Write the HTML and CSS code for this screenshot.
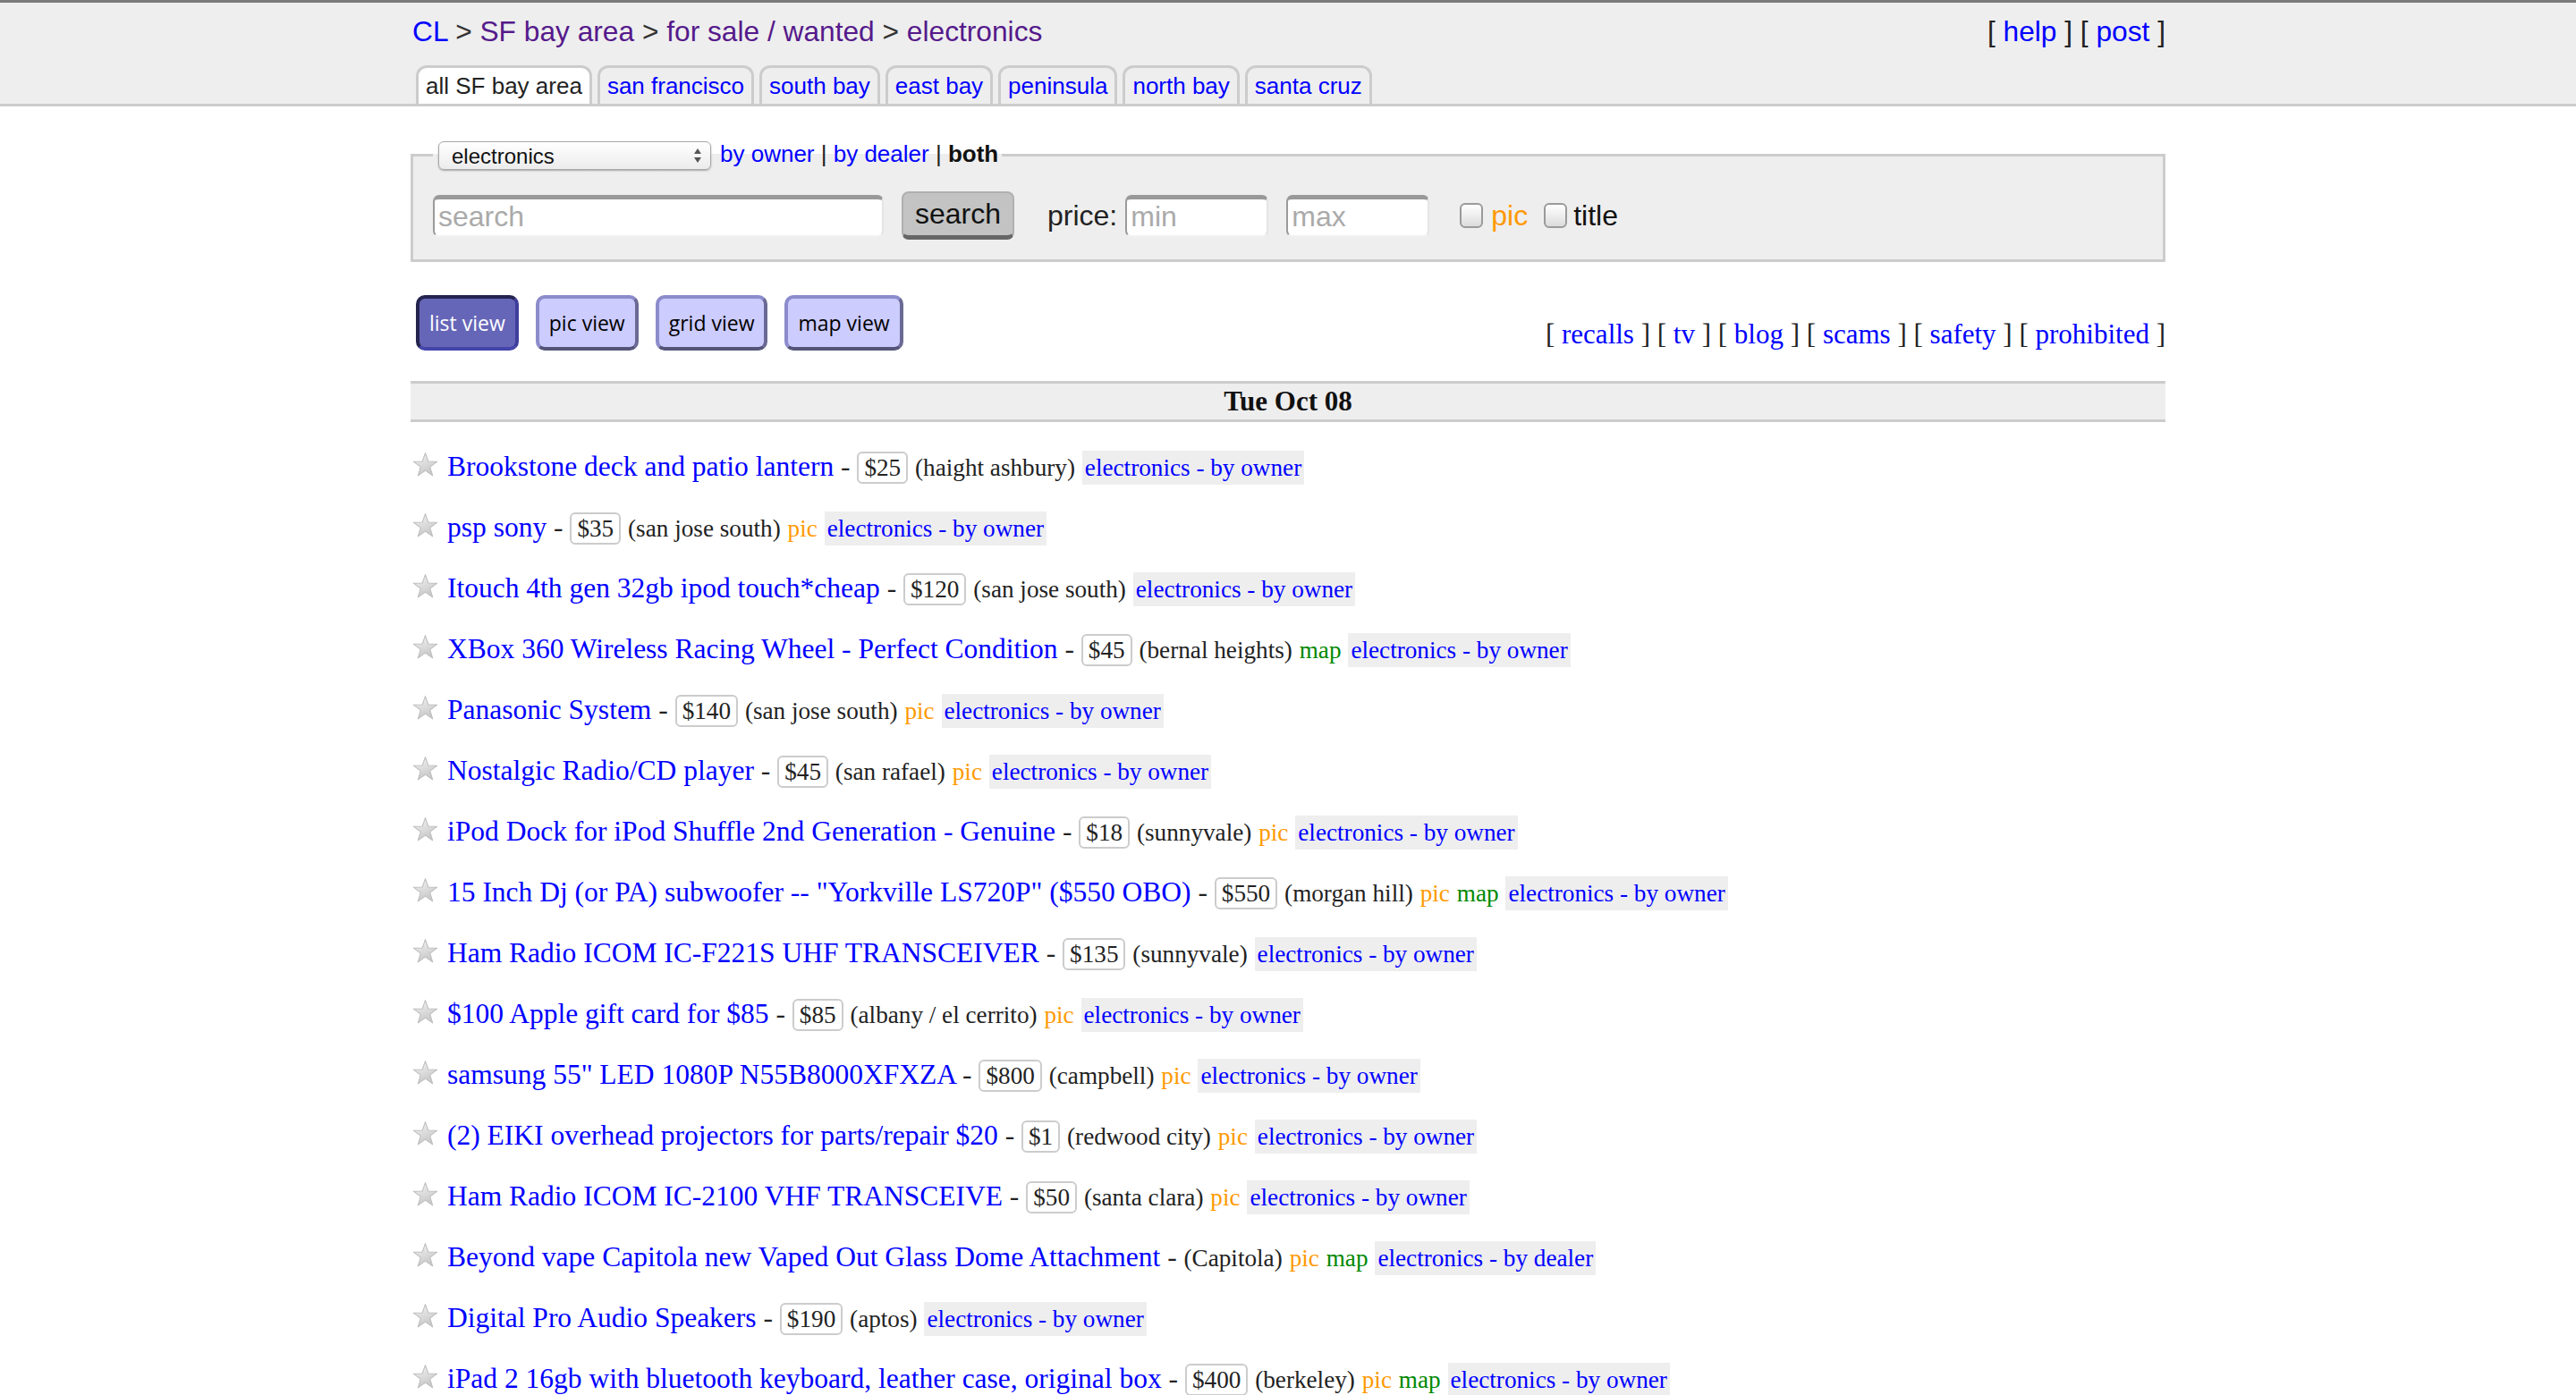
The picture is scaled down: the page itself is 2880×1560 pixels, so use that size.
FILE: index.html
```html
<!DOCTYPE html>
<html lang="en">
<head>
<meta charset="utf-8">
<title>SF bay area electronics - craigslist</title>
<link rel="stylesheet" href="styles.css">
</head>
<body>
<svg class="defs" width="0" height="0" aria-hidden="true">
  <defs>
    <linearGradient id="stargrad" x1="0" y1="0" x2="0.4" y2="1">
      <stop offset="0" stop-color="#f6f6f6"/>
      <stop offset="1" stop-color="#c8c8c8"/>
    </linearGradient>
    <symbol id="star" viewBox="0 0 28 28">
      <path d="M14 1.5 L17.2 10.6 L26.8 10.8 L19.1 16.6 L21.9 26 L14 20.4 L6.1 26 L8.9 16.6 L1.2 10.8 L10.8 10.6 Z" fill="url(#stargrad)" stroke="#bdbdbd" stroke-width="1" stroke-linejoin="round"/>
    </symbol>
  </defs>
</svg>

<header class="topbar">
  <div class="wrap">
    <div class="crumbrow">
      <div class="crumbs"><a href="#" class="cl">CL</a> &gt; <a href="#" class="vis">SF bay area</a> &gt; <a href="#" class="vis">for sale / wanted</a> &gt; <a href="#" class="vis">electronics</a></div>
      <div class="help">[ <a href="#">help</a> ] [ <a href="#">post</a> ]</div>
    </div>
    <nav class="tabs">
      <span class="tab current">all SF bay area</span>
      <a href="#" class="tab">san francisco</a>
      <a href="#" class="tab">south bay</a>
      <a href="#" class="tab">east bay</a>
      <a href="#" class="tab">peninsula</a>
      <a href="#" class="tab">north bay</a>
      <a href="#" class="tab">santa cruz</a>
    </nav>
  </div>
</header>

<main class="wrap">
  <form class="searchform">
    <fieldset>
      <legend><span class="selwrap"><select class="catsel"><option>electronics</option></select><svg class="selarrows" width="10" height="18" viewBox="0 0 10 18"><path d="M1 7 L5 1 L9 7 Z M1 11 L5 17 L9 11 Z" fill="#555"/></svg></span><a href="#">by owner</a> | <a href="#">by dealer</a> | <b>both</b></legend>
      <div class="searchrow">
        <input class="q" type="text" placeholder="search">
        <button class="go" type="button">search</button>
        <span class="pricelbl">price:</span>
        <input class="num min" type="text" placeholder="min">
        <input class="num max" type="text" placeholder="max">
        <input class="cb cb1" type="checkbox"><span class="piclbl">pic</span>
        <input class="cb cb2" type="checkbox"><span class="titlelbl">title</span>
      </div>
    </fieldset>
  </form>

  <div class="viewbar">
    <div class="views">
      <a href="#" class="vbtn active">list view</a>
      <a href="#" class="vbtn">pic view</a>
      <a href="#" class="vbtn">grid view</a>
      <a href="#" class="vbtn">map view</a>
    </div>
    <div class="links">[ <a href="#">recalls</a> ] [ <a href="#">tv</a> ] [ <a href="#">blog</a> ] [ <a href="#">scams</a> ] [ <a href="#">safety</a> ] [ <a href="#">prohibited</a> ]</div>
  </div>

  <h4 class="ban">Tue Oct 08</h4>

  <div class="rows">
    <p class="row"><svg class="star"><use href="#star"/></svg><a href="#" class="title">Brookstone deck and patio lantern</a> - <span class="price">$25</span> <span class="loc">(haight ashbury)</span> <a href="#" class="cat">electronics - by owner</a></p>
    <p class="row"><svg class="star"><use href="#star"/></svg><a href="#" class="title">psp sony</a> - <span class="price">$35</span> <span class="loc">(san jose south)</span> <span class="pic">pic</span> <a href="#" class="cat">electronics - by owner</a></p>
    <p class="row"><svg class="star"><use href="#star"/></svg><a href="#" class="title">Itouch 4th gen 32gb ipod touch*cheap</a> - <span class="price">$120</span> <span class="loc">(san jose south)</span> <a href="#" class="cat">electronics - by owner</a></p>
    <p class="row"><svg class="star"><use href="#star"/></svg><a href="#" class="title">XBox 360 Wireless Racing Wheel - Perfect Condition</a> - <span class="price">$45</span> <span class="loc">(bernal heights)</span> <span class="map">map</span> <a href="#" class="cat">electronics - by owner</a></p>
    <p class="row"><svg class="star"><use href="#star"/></svg><a href="#" class="title">Panasonic System</a> - <span class="price">$140</span> <span class="loc">(san jose south)</span> <span class="pic">pic</span> <a href="#" class="cat">electronics - by owner</a></p>
    <p class="row"><svg class="star"><use href="#star"/></svg><a href="#" class="title">Nostalgic Radio/CD player</a> - <span class="price">$45</span> <span class="loc">(san rafael)</span> <span class="pic">pic</span> <a href="#" class="cat">electronics - by owner</a></p>
    <p class="row"><svg class="star"><use href="#star"/></svg><a href="#" class="title">iPod Dock for iPod Shuffle 2nd Generation - Genuine</a> - <span class="price">$18</span> <span class="loc">(sunnyvale)</span> <span class="pic">pic</span> <a href="#" class="cat">electronics - by owner</a></p>
    <p class="row"><svg class="star"><use href="#star"/></svg><a href="#" class="title">15 Inch Dj (or PA) subwoofer -- "Yorkville LS720P" ($550 OBO)</a> - <span class="price">$550</span> <span class="loc">(morgan hill)</span> <span class="pic">pic</span> <span class="map">map</span> <a href="#" class="cat">electronics - by owner</a></p>
    <p class="row"><svg class="star"><use href="#star"/></svg><a href="#" class="title">Ham Radio ICOM IC-F221S UHF TRANSCEIVER</a> - <span class="price">$135</span> <span class="loc">(sunnyvale)</span> <a href="#" class="cat">electronics - by owner</a></p>
    <p class="row"><svg class="star"><use href="#star"/></svg><a href="#" class="title">$100 Apple gift card for $85</a> - <span class="price">$85</span> <span class="loc">(albany / el cerrito)</span> <span class="pic">pic</span> <a href="#" class="cat">electronics - by owner</a></p>
    <p class="row"><svg class="star"><use href="#star"/></svg><a href="#" class="title">samsung 55" LED 1080P N55B8000XFXZA</a> - <span class="price">$800</span> <span class="loc">(campbell)</span> <span class="pic">pic</span> <a href="#" class="cat">electronics - by owner</a></p>
    <p class="row"><svg class="star"><use href="#star"/></svg><a href="#" class="title">(2) EIKI overhead projectors for parts/repair $20</a> - <span class="price">$1</span> <span class="loc">(redwood city)</span> <span class="pic">pic</span> <a href="#" class="cat">electronics - by owner</a></p>
    <p class="row"><svg class="star"><use href="#star"/></svg><a href="#" class="title">Ham Radio ICOM IC-2100 VHF TRANSCEIVE</a> - <span class="price">$50</span> <span class="loc">(santa clara)</span> <span class="pic">pic</span> <a href="#" class="cat">electronics - by owner</a></p>
    <p class="row"><svg class="star"><use href="#star"/></svg><a href="#" class="title">Beyond vape Capitola new Vaped Out Glass Dome Attachment</a> - <span class="loc">(Capitola)</span> <span class="pic">pic</span> <span class="map">map</span> <a href="#" class="cat">electronics - by dealer</a></p>
    <p class="row"><svg class="star"><use href="#star"/></svg><a href="#" class="title">Digital Pro Audio Speakers</a> - <span class="price">$190</span> <span class="loc">(aptos)</span> <a href="#" class="cat">electronics - by owner</a></p>
    <p class="row"><svg class="star"><use href="#star"/></svg><a href="#" class="title">iPad 2 16gb with bluetooth keyboard, leather case, original box</a> - <span class="price">$400</span> <span class="loc">(berkeley)</span> <span class="pic">pic</span> <span class="map">map</span> <a href="#" class="cat">electronics - by owner</a></p>
  </div>
</main>
</body>
</html>
```

FILE: styles.css
```css
* { box-sizing: border-box; }

body {
  margin: 0;
  background: #fff;
  color: #222;
  font-family: "Liberation Serif", "Times New Roman", serif;
}

a { color: #00f; text-decoration: none; }

.defs { position: absolute; width: 0; height: 0; overflow: hidden; }

.wrap { width: 1962px; margin: 0 auto; }

/* ---------- header ---------- */
.topbar {
  background: #eee;
  border-top: 3px solid #7b7b7b;
  border-bottom: 3px solid #ccc;
  font-family: "Liberation Sans", Arial, Helvetica, sans-serif;
}

.crumbrow {
  display: flex;
  justify-content: space-between;
  align-items: center;
  padding-top: 14px;
  font-size: 31.7px;
  line-height: 37px;
}

.crumbs { padding-left: 2px; color: #333; }
.crumbs .cl { color: #00f; }
.crumbs .vis { color: #551a8b; }

.help { color: #222; }

.tabs {
  display: flex;
  gap: 6px;
  margin-top: 19px;
  padding-left: 6px;
}

.tab {
  font-size: 26px;
  line-height: 40px;
  padding: 0 8px;
  border: 3px solid #ccc;
  border-bottom: 0;
  border-radius: 12px 12px 0 0;
  background: #eee;
  color: #00f;
}

.tab.current { background: #fff; color: #222; }

/* ---------- search form ---------- */
.searchform { margin: 37px 0 0; }

fieldset {
  margin: 0;
  border: 3px solid #ccc;
  background: #eee;
  padding: 24px 22px 22px;
  font-family: "Liberation Sans", Arial, Helvetica, sans-serif;
}

legend {
  padding: 0 4px 0 6px;
  font-size: 26px;
  line-height: 32px;
  color: #222;
}

.selwrap {
  position: relative;
  display: inline-block;
  vertical-align: middle;
  margin-right: 10px;
}

.catsel {
  -webkit-appearance: none;
  appearance: none;
  display: block;
  width: 305px;
  height: 32px;
  padding: 0 14px;
  font-family: "Liberation Sans", Arial, sans-serif;
  font-size: 24px;
  color: #111;
  border: 1px solid #a8a8a8;
  border-radius: 6px;
  background: linear-gradient(#ffffff, #ececec);
  box-shadow: 0 1px 2px rgba(0, 0, 0, 0.3);
}

.selarrows {
  position: absolute;
  right: 10px;
  top: 7px;
  pointer-events: none;
}

legend b { color: #111; }

.searchrow {
  display: flex;
  align-items: center;
  font-size: 32px;
}

.q, .num {
  height: 47px;
  font-family: "Liberation Sans", Arial, sans-serif;
  font-size: 32px;
  padding: 0 4px;
  background: #fff;
  border: 2px solid;
  border-top-width: 5px;
  border-color: #999 #e4e4e4 #f2f2f2 #9a9a9a;
  border-radius: 7px;
  outline: none;
}

.q::placeholder, .num::placeholder { color: #aaa; }

.q { width: 504px; }

.go {
  margin-left: 20px;
  width: 126px;
  height: 54px;
  font-family: "Liberation Sans", Arial, sans-serif;
  font-size: 32px;
  color: #111;
  background: #c3c3c3;
  border: 2px solid #b0b0b0;
  border-bottom: 5px solid #666;
  border-radius: 8px;
  padding: 0;
}

.pricelbl { margin-left: 37px; color: #222; }

.num { width: 160px; }
.min { margin-left: 9px; }
.max { margin-left: 20px; }

.cb {
  -webkit-appearance: none;
  appearance: none;
  width: 26px;
  height: 28px;
  margin: 0;
  border: 2px solid #9a9a9a;
  border-radius: 6px;
  background: linear-gradient(#ffffff, #dcdcdc);
}

.cb1 { margin-left: 34px; }
.cb2 { margin-left: 18px; }

.piclbl { margin-left: 9px; color: #f90; }
.titlelbl { margin-left: 7px; color: #111; }

/* ---------- view bar ---------- */
.viewbar {
  display: flex;
  justify-content: space-between;
  align-items: flex-end;
  margin-top: 37px;
}

.views {
  display: flex;
  gap: 19px;
  padding-left: 6px;
}

.vbtn {
  font-family: "Open Sans", "DejaVu Sans", sans-serif;
  font-size: 23px;
  line-height: 54px;
  padding: 0 11px;
  border: 4px solid;
  border-color: #8c8ccc #6a6a94 #55557a #8c8ccc;
  border-radius: 10px;
  background: #ccf;
  color: #000;
}

.vbtn.active {
  background: #6666b8;
  color: #fff;
  border-color: #24244f #3e3e9c #4444aa #24244f;
}

.links {
  font-size: 31px;
  line-height: 36px;
  color: #222;
}

/* ---------- date banner ---------- */
.ban {
  margin: 34px 0 0;
  background: #eee;
  border-top: 3px solid #ccc;
  border-bottom: 3px solid #ccc;
  text-align: center;
  font-size: 31px;
  line-height: 40px;
  font-weight: bold;
  color: #111;
}

/* ---------- rows ---------- */
.rows { margin-top: 16px; }

.row {
  margin: 0;
  height: 68px;
  line-height: 68px;
  font-size: 31.5px;
  white-space: nowrap;
  padding-left: 2px;
  color: #222;
}

.star {
  width: 29px;
  height: 29px;
  vertical-align: -2px;
  margin-right: 10px;
}

.title { color: #00f; }

.price {
  display: inline-block;
  border: 2px solid #ccc;
  border-radius: 6px;
  padding: 0 6px;
  line-height: 32px;
  font-size: 27.2px;
  color: #222;
}

.loc { font-size: 27.2px; color: #222; }
.pic { font-size: 27.2px; color: #f90; }
.map { font-size: 27.2px; color: #080; }

.cat {
  display: inline-block;
  background: #eee;
  padding: 0 3px;
  line-height: 38px;
  font-size: 27.2px;
  color: #00f;
}
```
